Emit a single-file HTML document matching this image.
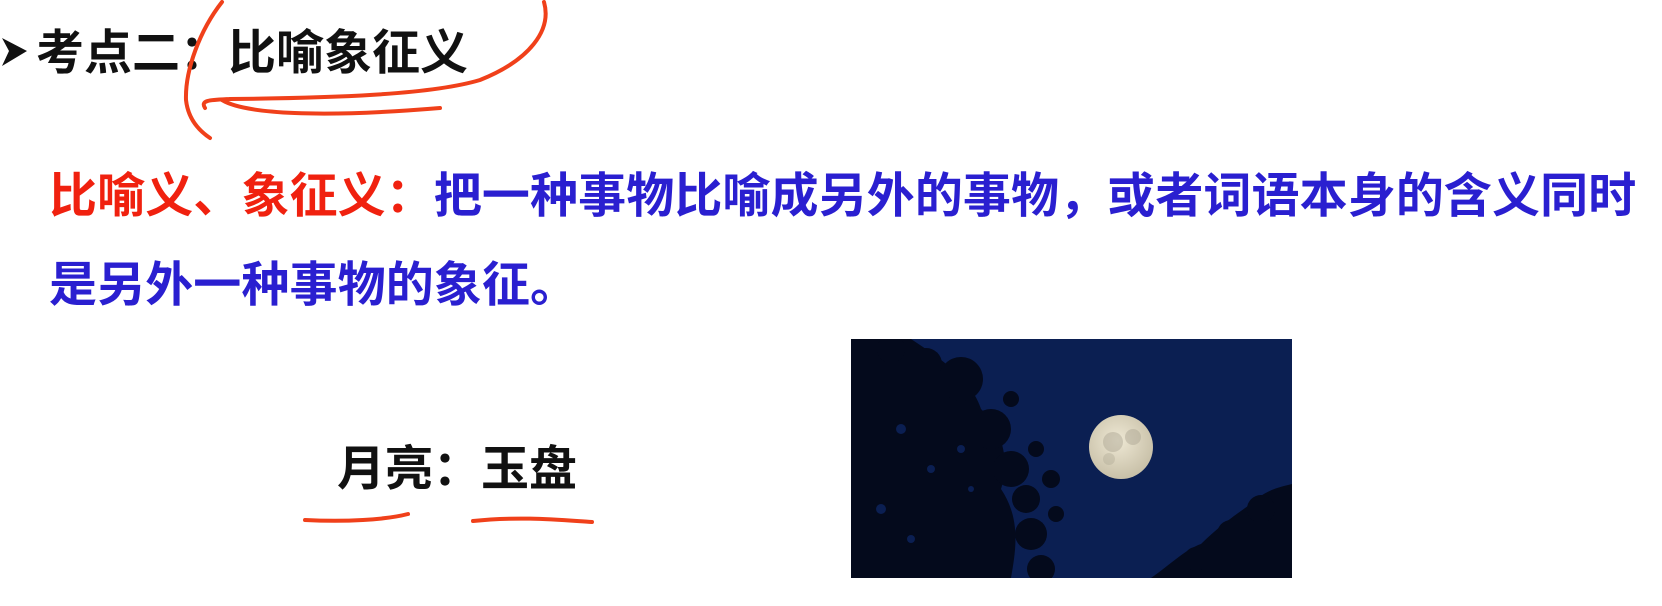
<!DOCTYPE html>
<html><head><meta charset="utf-8"><style>
body{margin:0;width:1662px;height:606px;background:#fff;position:relative;overflow:hidden;font-family:"Liberation Sans","Noto Sans CJK SC",sans-serif;font-weight:bold}
.t{position:absolute;white-space:nowrap;line-height:1}
</style></head><body>
<svg style="position:absolute;left:0;top:0" width="1662" height="606">
<path d="M2 38 L27 51 L2 66 L9 51 Z" fill="#111"/>
</svg>
<div class="t" style="left:36px;top:30px;font-size:48px;color:#111">考点二：比喻象征义</div>
<div class="t" style="left:49px;top:173px;font-size:48px;letter-spacing:0.1px"><span style="color:#f0210f">比喻义、象征义：</span><span style="color:#2a1fd0">把一种事物比喻成另外的事物，或者词语本身的含义同时</span></div>
<div class="t" style="left:49px;top:262px;font-size:48px;letter-spacing:0.1px;color:#2a1fd0">是另外一种事物的象征。</div>
<div class="t" style="left:337px;top:446px;font-size:48px;color:#111">月亮：玉盘</div>
<svg style="position:absolute;left:0;top:0" width="1662" height="606">
<g fill="none" stroke="#f0401a" stroke-width="4" stroke-linecap="round">
<path d="M222 2 C200 30 185 70 186 100 C188 118 198 130 210 138"/>
<path d="M205 108 C200 100 210 100 230 99 C330 98 430 95 480 80 C530 60 552 30 544 2"/>
<path d="M222 100 C245 114 320 118 440 108"/>
<path d="M305 520 C345 522 385 520 408 514"/>
<path d="M473 521 C520 516 560 520 592 522"/>
</g>
</svg>
<svg style="position:absolute;left:851px;top:339px" width="441" height="239" viewBox="0 0 441 239">
<defs><radialGradient id="m" cx="0.45" cy="0.4" r="0.6"><stop offset="0" stop-color="#eee8d4"/><stop offset="1" stop-color="#c8c0a8"/></radialGradient></defs>
<rect width="441" height="239" fill="#0b1f52"/>
<g fill="#040a1c">
<path d="M0 0 L60 0 C90 20 120 40 130 70 C150 90 160 120 150 150 C170 180 165 210 160 239 L0 239 Z"/>
<circle cx="110" cy="40" r="22"/><circle cx="140" cy="90" r="20"/><circle cx="160" cy="130" r="18"/>
<circle cx="175" cy="160" r="14"/><circle cx="180" cy="195" r="16"/><circle cx="190" cy="230" r="14"/>
<circle cx="160" cy="60" r="8"/><circle cx="185" cy="110" r="8"/><circle cx="200" cy="140" r="9"/>
<circle cx="205" cy="175" r="8"/><circle cx="140" cy="215" r="18"/><circle cx="120" cy="180" r="14"/>
<circle cx="75" cy="25" r="16"/><circle cx="40" cy="10" r="14"/>
<path d="M300 239 C320 225 335 210 350 205 C365 190 385 175 400 165 C415 150 430 148 441 145 L441 239 Z"/>
<circle cx="410" cy="170" r="14"/><circle cx="380" cy="195" r="14"/><circle cx="345" cy="220" r="12"/>
</g>
<g fill="#0b1f52"><circle cx="50" cy="90" r="5"/><circle cx="80" cy="130" r="4"/><circle cx="30" cy="170" r="5"/><circle cx="110" cy="110" r="4"/><circle cx="60" cy="200" r="4"/><circle cx="120" cy="150" r="3"/></g>
<circle cx="270" cy="108" r="32" fill="url(#m)"/>
<circle cx="262" cy="103" r="10" fill="#a8a290" opacity="0.45"/>
<circle cx="282" cy="98" r="8" fill="#a8a290" opacity="0.45"/>
<circle cx="258" cy="120" r="6" fill="#a8a290" opacity="0.35"/>
</svg>
</body></html>
